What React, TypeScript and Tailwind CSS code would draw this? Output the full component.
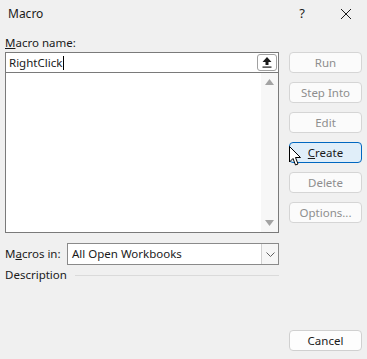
import React from "react";

const font = { fontFamily: '"Noto Sans", "Open Sans", sans-serif' };

function DlgButton({
  label,
  underline,
  disabled,
  active,
  className = "",
}: {
  label: string;
  underline?: number;
  disabled?: boolean;
  active?: boolean;
  className?: string;
}) {
  const text =
    underline === undefined ? (
      label
    ) : (
      <>
        {label.slice(0, underline)}
        <u>{label[underline]}</u>
        {label.slice(underline + 1)}
      </>
    );
  return (
    <div
      className={`flex h-[21px] w-[73px] items-center justify-center rounded-[4px] border text-[11.5px] leading-none ${
        active
          ? "border-[#0067c0] bg-[#e0eef9] text-[#1a1a1a]"
          : disabled
          ? "border-[#d5d5d5] bg-[#fbfbfb] text-[#8e8e8e]"
          : "border-[#d0d0d0] bg-[#fdfdfd] text-[#1a1a1a]"
      } ${className}`}
    >
      {text}
    </div>
  );
}

export default function App() {
  return (
    <div
      className="relative flex h-[359px] w-[367px] flex-col bg-[#f0f0f0] text-[#1a1a1a]"
      style={font}
    >
      {/* title bar */}
      <div className="flex h-[28px] items-center justify-between pl-[8px]">
        <span className="text-[12px]">Macro</span>
        <div className="flex items-center">
          <span className="mr-[35px] text-[13px]">?</span>
          <svg width="12" height="12" viewBox="0 0 12 12" className="mr-[15px]">
            <path d="M1 1 L11 11 M11 1 L1 11" stroke="#1a1a1a" strokeWidth="1" />
          </svg>
        </div>
      </div>

      <div className="flex flex-1 px-[5px]">
        {/* left column */}
        <div className="flex w-[274px] flex-col">
          <div className="mt-[6px] h-[18px] text-[11.5px] leading-[17px]">
            <u>M</u>acro name:
          </div>
          <div className="flex h-[20px] items-center border border-b-0 border-[#7a7a7a] bg-white pl-[3px]">
            <span className="text-[11.5px] leading-none">RightClick</span>
            <span className="ml-[1px] h-[14px] w-[1px] bg-black" />
            <div className="ml-auto mr-[1px] flex h-[17px] w-[20px] items-center justify-center rounded-[3px] border border-[#a0a0a0] bg-white">
              <svg width="10" height="11" viewBox="0 0 10 11">
                <path d="M5 0 L9.5 5 L6.5 5 L6.5 8 L3.5 8 L3.5 5 L0.5 5 Z" fill="#1a1a1a" />
                <rect x="0.5" y="9.5" width="9" height="1.2" fill="#1a1a1a" />
              </svg>
            </div>
          </div>
          <div className="flex h-[161px] border border-[#7a7a7a] bg-white">
            <div className="flex-1" />
            <div className="flex w-[17px] flex-col items-center justify-between bg-[#f7f7f7] py-[6px]">
              <svg width="9" height="6" viewBox="0 0 9 6">
                <path d="M4.5 0 L9 6 L0 6 Z" fill="#a3a3a3" />
              </svg>
              <svg width="9" height="6" viewBox="0 0 9 6">
                <path d="M0 0 L9 0 L4.5 6 Z" fill="#a3a3a3" />
              </svg>
            </div>
          </div>
          <div className="mt-[10px] flex h-[22px] items-center">
            <span className="w-[62px] text-[11.5px]">
              M<u>a</u>cros in:
            </span>
            <div className="flex h-[22px] flex-1 items-center border border-[#8a8a8a] bg-white">
              <span className="flex-1 pl-[4px] text-[11.5px]">All Open Workbooks</span>
              <div className="flex h-full w-[17px] items-center justify-center border-l border-[#d0d0d0] bg-[#f6f6f6]">
                <svg width="9" height="5" viewBox="0 0 9 5">
                  <path d="M0.5 0.5 L4.5 4.5 L8.5 0.5" stroke="#606060" fill="none" strokeWidth="1" />
                </svg>
              </div>
            </div>
          </div>
          <div className="mt-[1px] flex h-[18px] items-center">
            <span className="text-[11.5px]">Description</span>
            <div className="ml-[8px] h-[1px] flex-1 bg-[#dadada]" />
          </div>
        </div>

        {/* right column */}
        <div className="ml-[10px] flex flex-col">
          <div className="mt-[24px] flex flex-col gap-[9px]">
            <DlgButton label="Run" disabled />
            <DlgButton label="Step Into" disabled />
            <DlgButton label="Edit" disabled />
            <DlgButton label="Create" underline={0} active />
            <DlgButton label="Delete" disabled />
            <DlgButton label="Options..." disabled />
          </div>
          <DlgButton label="Cancel" className="mt-[107px]" />
        </div>
      </div>

      {/* mouse pointer */}
      <svg
        width="13"
        height="21"
        viewBox="0 0 13 21"
        className="absolute left-[289px] top-[146px]"
      >
        <path
          d="M0.5 0.5 L0.5 16 L4 12.5 L6.5 19 L9 18 L6.5 11.5 L11.5 11.5 Z"
          fill="white"
          stroke="black"
          strokeWidth="1"
        />
      </svg>
    </div>
  );
}
